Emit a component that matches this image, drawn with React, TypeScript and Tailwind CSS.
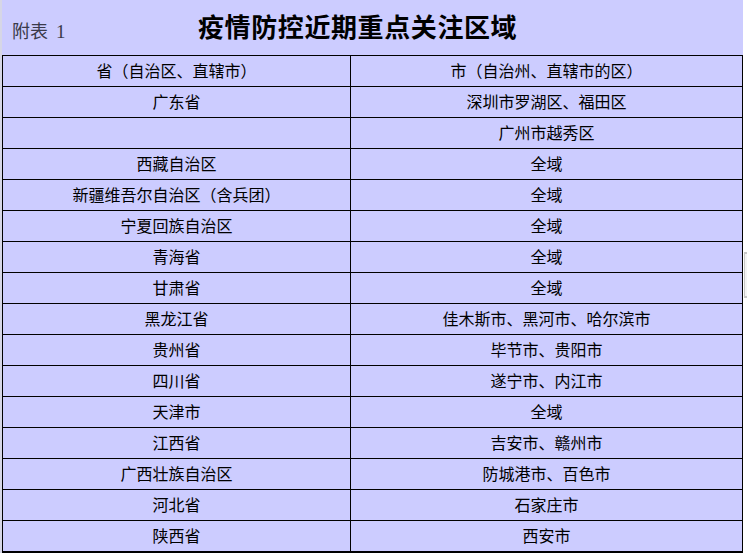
import React from "react";

const rows: [string, string][] = [
  ["广东省", "深圳市罗湖区、福田区"],
  ["", "广州市越秀区"],
  ["西藏自治区", "全域"],
  ["新疆维吾尔自治区（含兵团）", "全域"],
  ["宁夏回族自治区", "全域"],
  ["青海省", "全域"],
  ["甘肃省", "全域"],
  ["黑龙江省", "佳木斯市、黑河市、哈尔滨市"],
  ["贵州省", "毕节市、贵阳市"],
  ["四川省", "遂宁市、内江市"],
  ["天津市", "全域"],
  ["江西省", "吉安市、赣州市"],
  ["广西壮族自治区", "防城港市、百色市"],
  ["河北省", "石家庄市"],
  ["陕西省", "西安市"],
];

const font = { fontFamily: '"Noto Sans CJK SC", "Noto Sans", sans-serif' };

export default function App() {
  return (
    <div className="relative w-[747px] h-[555px] bg-white overflow-hidden" style={font}>
      <div className="w-[743px] bg-[#ccccff] border-l-2 border-[#d6d6e6]">
        <div className="h-[55px] flex items-center">
          <span className="ml-[10px] mt-[6px] text-[18px] leading-none text-[#3a3a4a] w-[186px] flex items-baseline">
            <span>附表</span>
            <span className="ml-[8px] font-['Liberation_Serif',serif] text-[19px]">1</span>
          </span>
          <span className="mb-[4px] text-[26px] leading-none font-bold text-black tracking-[0.6px]">疫情防控近期重点关注区域</span>
        </div>
        <div className="border border-b-2 border-black">
          <div className="grid grid-cols-[348px_391px] h-[31px] border-b border-black text-[16px] leading-none text-black">
            <div className="border-r border-black flex items-center justify-center pb-[3px]">省（自治区、直辖市）</div>
            <div className="flex items-center justify-center pb-[3px]">市（自治州、直辖市的区）</div>
          </div>
          {rows.map(([a, b], i) => (
            <div
              key={i}
              className={
                i === rows.length - 1
                  ? "grid grid-cols-[348px_391px] h-[30px] text-[16px] leading-none text-black"
                  : "grid grid-cols-[348px_391px] h-[31px] border-b border-black text-[16px] leading-none text-black"
              }
            >
              <div className="border-r border-black flex items-center justify-center pb-[3px]">{a}</div>
              <div className="flex items-center justify-center pb-[3px]">{b}</div>
            </div>
          ))}
        </div>
      </div>
      <div className="absolute left-[744px] top-[252px] w-[3px] h-[46px] border-t-2 border-b-2 border-l border-[#c8c8c8] bg-[#f4f4f4]" />
    </div>
  );
}
